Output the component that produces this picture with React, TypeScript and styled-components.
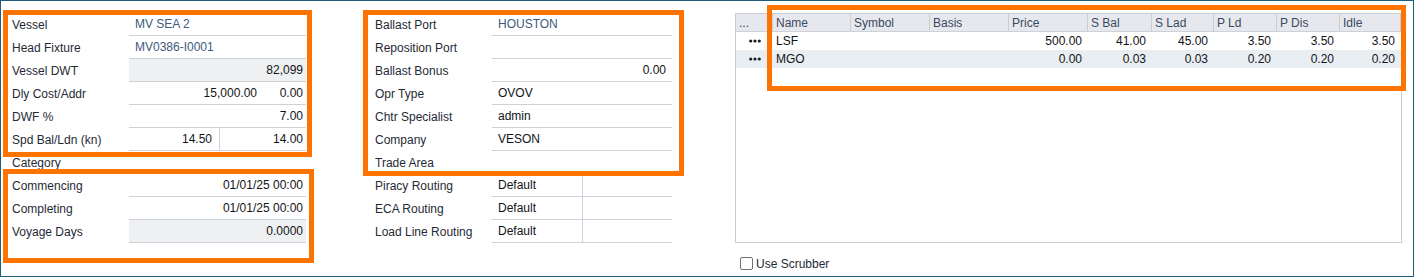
import React from "react";
import styled, { createGlobalStyle } from "styled-components";

const Global = createGlobalStyle`
  html, body { margin: 0; padding: 0; background: #ffffff; }
  body { font-family: "Liberation Sans", Arial, sans-serif; font-size: 12px; color: #1c2733; }
  * { box-sizing: border-box; }
`;

const Frame = styled.div`
  position: relative;
  width: 1414px;
  height: 277px;
  border: 1px solid #1d5c7a;
  padding: 12px 11px 0 7px;
  display: flex;
  align-items: flex-start;
  background: #fff;
`;

const FormPanel = styled.div<{ $width: number; $gapAfter: number }>`
  width: ${(p) => p.$width}px;
  margin-right: ${(p) => p.$gapAfter}px;
  display: flex;
  flex-direction: column;
`;

const Row = styled.div`
  display: flex;
  height: 23px;
`;

const Label = styled.div`
  width: 121px;
  flex: none;
  padding-left: 4px;
  display: flex;
  align-items: center;
  color: #1f2a36;
  white-space: nowrap;
`;

const ValueCell = styled.div<{ $fill?: boolean; $padRight: number }>`
  flex: 1;
  display: flex;
  border-bottom: 1px solid #cdd2da;
  background: ${(p) => (p.$fill ? "#eef0f2" : "transparent")};
  padding-right: ${(p) => p.$padRight}px;
`;

const Part = styled.div<{
  $width?: number;
  $align?: "left" | "right";
  $tone?: "link" | "plain";
  $divider?: boolean;
}>`
  ${(p) => (p.$width ? `width: ${p.$width}px; flex: none;` : "flex: 1;")}
  display: flex;
  align-items: center;
  justify-content: ${(p) => (p.$align === "right" ? "flex-end" : "flex-start")};
  padding-left: ${(p) => (p.$align === "right" ? 0 : 6)}px;
  padding-right: ${(p) => (p.$divider ? 7 : 0)}px;
  border-right: ${(p) => (p.$divider ? "1px solid #cdd2da" : "none")};
  color: ${(p) => (p.$tone === "link" ? "#3d5a7c" : "#111418")};
  white-space: nowrap;
`;

type PartSpec = {
  text?: string;
  width?: number;
  align?: "left" | "right";
  tone?: "link" | "plain";
  divider?: boolean;
};

type FieldSpec = {
  label: string;
  parts: PartSpec[];
  fill?: boolean;
};

const Field: React.FC<{ spec: FieldSpec; padRight: number }> = ({ spec, padRight }) => (
  <Row>
    <Label>{spec.label}</Label>
    <ValueCell $fill={spec.fill} $padRight={padRight}>
      {spec.parts.map((p, i) => (
        <Part key={i} $width={p.width} $align={p.align} $tone={p.tone} $divider={p.divider}>
          {p.text}
        </Part>
      ))}
    </ValueCell>
  </Row>
);

const leftFields: FieldSpec[] = [
  { label: "Vessel", parts: [{ text: "MV SEA 2", tone: "link" }] },
  { label: "Head Fixture", parts: [{ text: "MV0386-I0001", tone: "link" }] },
  { label: "Vessel DWT", parts: [{ text: "82,099", align: "right" }], fill: true },
  {
    label: "Dly Cost/Addr",
    parts: [
      { text: "15,000.00", align: "right", width: 128 },
      { text: "0.00", align: "right" },
    ],
  },
  { label: "DWF %", parts: [{ text: "7.00", align: "right" }] },
  {
    label: "Spd Bal/Ldn (kn)",
    parts: [
      { text: "14.50", align: "right", width: 91, divider: true },
      { text: "14.00", align: "right" },
    ],
  },
  { label: "Category", parts: [{}] },
  { label: "Commencing", parts: [{ text: "01/01/25 00:00", align: "right" }] },
  { label: "Completing", parts: [{ text: "01/01/25 00:00", align: "right" }] },
  { label: "Voyage Days", parts: [{ text: "0.0000", align: "right" }], fill: true },
];

const midFields: FieldSpec[] = [
  { label: "Ballast Port", parts: [{ text: "HOUSTON", tone: "link" }] },
  { label: "Reposition Port", parts: [{}] },
  { label: "Ballast Bonus", parts: [{ text: "0.00", align: "right" }] },
  { label: "Opr Type", parts: [{ text: "OVOV" }] },
  { label: "Chtr Specialist", parts: [{ text: "admin" }] },
  { label: "Company", parts: [{ text: "VESON" }] },
  { label: "Trade Area", parts: [{}] },
  { label: "Piracy Routing", parts: [{ text: "Default", width: 91, divider: true }, {}] },
  { label: "ECA Routing", parts: [{ text: "Default", width: 91, divider: true }, {}] },
  { label: "Load Line Routing", parts: [{ text: "Default", width: 91, divider: true }, {}] },
];

/* ---------- Fuel grid ---------- */

const GridPanel = styled.div`
  width: 667px;
  display: flex;
  flex-direction: column;
`;

const GridBox = styled.div`
  height: 230px;
  border: 1px solid #c9ced6;
  background: #fff;
`;

const columns = [37, 78, 79, 79, 79, 64, 62, 63, 63, 61];
const template = columns.map((c) => `${c}px`).join(" ");

const GridHead = styled.div`
  display: grid;
  grid-template-columns: ${template};
  height: 18px;
  background: #e7e8ee;
  border-bottom: 1px solid #cdd1da;
`;

const HeadCell = styled.div`
  display: flex;
  align-items: center;
  padding-left: 3px;
  border-right: 1px solid #c9ced6;
  color: #3a4a5e;
  white-space: nowrap;
`;

const GridRow = styled.div<{ $alt?: boolean }>`
  display: grid;
  grid-template-columns: ${template};
  height: 18px;
  background: ${(p) => (p.$alt ? "#e9eef2" : "transparent")};
`;

const DataCell = styled.div<{ $align: "left" | "right" | "center" }>`
  display: flex;
  align-items: center;
  justify-content: ${(p) =>
    p.$align === "right" ? "flex-end" : p.$align === "center" ? "center" : "flex-start"};
  padding: ${(p) => (p.$align === "right" ? "0 6px 0 0" : p.$align === "center" ? "0" : "0 0 0 3px")};
  color: #111418;
  white-space: nowrap;
`;

const DotsIcon = () => (
  <svg width="12" height="4" viewBox="0 0 12 4" aria-hidden="true">
    <circle cx="1.7" cy="2" r="1.6" fill="#1a1f26" />
    <circle cx="6" cy="2" r="1.6" fill="#1a1f26" />
    <circle cx="10.3" cy="2" r="1.6" fill="#1a1f26" />
  </svg>
);

const fuelHeads = ["...", "Name", "Symbol", "Basis", "Price", "S Bal", "S Lad", "P Ld", "P Dis", "Idle"];
const fuelRows = [
  { name: "LSF", vals: ["500.00", "41.00", "45.00", "3.50", "3.50", "3.50"] },
  { name: "MGO", vals: ["0.00", "0.03", "0.03", "0.20", "0.20", "0.20"] },
];

const CheckRow = styled.label`
  display: flex;
  align-items: center;
  gap: 3px;
  margin-top: 14px;
  padding-left: 5px;
  height: 13px;
  color: #1f2a36;
`;

const Box = styled.span`
  width: 13px;
  height: 13px;
  border: 1px solid #6f7378;
  border-radius: 2px;
  background: #fff;
`;

/* ---------- Annotation highlights ---------- */

const Highlight = styled.div<{ $x: number; $y: number; $w: number; $h: number }>`
  position: absolute;
  left: ${(p) => p.$x}px;
  top: ${(p) => p.$y}px;
  width: ${(p) => p.$w}px;
  height: ${(p) => p.$h}px;
  border: 5px solid #ff7300;
  pointer-events: none;
`;

export default function App() {
  return (
    <>
      <Global />
      <Frame>
        <FormPanel $width={298} $gapAfter={65}>
          {leftFields.map((f) => (
            <Field key={f.label} spec={f} padRight={3} />
          ))}
        </FormPanel>
        <FormPanel $width={301} $gapAfter={63}>
          {midFields.map((f) => (
            <Field key={f.label} spec={f} padRight={6} />
          ))}
        </FormPanel>
        <GridPanel>
          <GridBox>
            <GridHead>
              {fuelHeads.map((h) => (
                <HeadCell key={h}>{h}</HeadCell>
              ))}
            </GridHead>
            {fuelRows.map((r, i) => (
              <GridRow key={r.name} $alt={i % 2 === 1}>
                <DataCell $align="center">
                  <DotsIcon />
                </DataCell>
                <DataCell $align="left">{r.name}</DataCell>
                <DataCell $align="left" />
                <DataCell $align="left" />
                {r.vals.map((v, j) => (
                  <DataCell key={j} $align="right">
                    {v}
                  </DataCell>
                ))}
              </GridRow>
            ))}
          </GridBox>
          <CheckRow>
            <Box />
            Use Scrubber
          </CheckRow>
        </GridPanel>

        <Highlight $x={2} $y={9} $w={309} $h={147} />
        <Highlight $x={2} $y={168} $w={311} $h={94} />
        <Highlight $x={362} $y={9} $w={321} $h={166} />
        <Highlight $x={766} $y={4} $w={639} $h={86} />
      </Frame>
    </>
  );
}
